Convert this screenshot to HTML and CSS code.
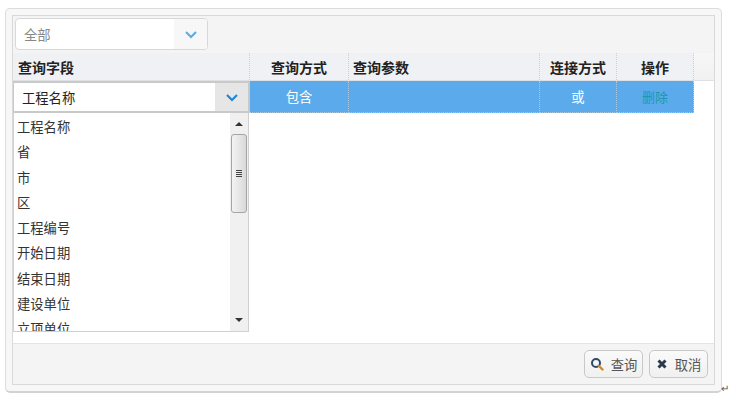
FILE: index.html
```html
<!DOCTYPE html>
<html lang="zh-CN">
<head>
<meta charset="utf-8">
<title>查询</title>
<link rel="stylesheet" href="styles.css">
</head>
<body>
<div class="window">
  <div class="panel">
    <div class="toolbar">
      <div class="select">
        <span class="select-text">全部</span>
        <span class="select-arrow"><svg width="14" height="9" viewBox="0 0 14 9"><path d="M2 2l5 5 5-5" fill="none" stroke="#5aace8" stroke-width="2"/></svg></span>
      </div>
    </div>
    <div class="grid-wrap">
      <div class="row head">
        <div class="cell c1 left first">查询字段</div>
        <div class="cell c2">查询方式</div>
        <div class="cell c3 left">查询参数</div>
        <div class="cell c4">连接方式</div>
        <div class="cell c5">操作</div>
        <div class="cell c6"></div>
      </div>
      <div class="row body-row">
        <div class="cell c1 field">
          <span class="field-text">工程名称</span>
          <span class="field-arrow"><svg width="14" height="9" viewBox="0 0 14 9"><path d="M2 2l5 5 5-5" fill="none" stroke="#1e87d8" stroke-width="2.2"/></svg></span>
        </div>
        <div class="cell c2 sel">包含</div>
        <div class="cell c3 sel"></div>
        <div class="cell c4 sel">或</div>
        <div class="cell c5 sel del">删除</div>
      </div>
      <div class="dropdown">
        <ul class="list">
          <li>工程名称</li>
          <li>省</li>
          <li>市</li>
          <li>区</li>
          <li>工程编号</li>
          <li>开始日期</li>
          <li>结束日期</li>
          <li>建设单位</li>
          <li>立项单位</li>
        </ul>
        <div class="scrollbar">
          <svg class="sb-up" width="8" height="4" viewBox="0 0 8 4"><path d="M4 0l4 4H0z" fill="#333"/></svg>
          <div class="thumb"><span class="grip"></span><span class="grip"></span><span class="grip"></span><span class="grip"></span></div>
          <svg class="sb-down" width="8" height="4" viewBox="0 0 8 4"><path d="M0 0h8L4 4z" fill="#333"/></svg>
        </div>
      </div>
    </div>
    <div class="footer">
      <button class="btn" type="button">
        <svg width="14" height="14" viewBox="0 0 14 14"><circle cx="6" cy="6" r="4" fill="none" stroke="#2f4a66" stroke-width="2"/><path d="M9 9l3.500 3.500" stroke="#c98a2e" stroke-width="2.400" stroke-linecap="round"/></svg>
        <span>查询</span>
      </button>
      <button class="btn" type="button">
        <svg width="12" height="12" viewBox="0 0 12 12"><path d="M2.500 2.500l7 7M9.500 2.500l-7 7" stroke="#2b3a4a" stroke-width="3"/></svg>
        <span>取消</span>
      </button>
    </div>
  </div>
</div>
<span class="return-mark">↵</span>
</body>
</html>
```
FILE: styles.css
```css
html, body {
  margin: 0;
  padding: 0;
  background: #fff;
}
body {
  width: 729px;
  height: 400px;
  overflow: hidden;
  position: relative;
  font-family: "Liberation Sans", "Noto Sans CJK SC", sans-serif;
  font-size: 13.3px;
  color: #333;
  padding: 8px 0 0 5px;
  box-sizing: border-box;
}
.window {
  width: 717px;
  height: 385px;
  box-sizing: border-box;
  border: 1px solid #dcdcdc;
  border-bottom: 2px solid #d2d2d2;
  border-radius: 5px;
  padding: 6px;
  background: #f7f7f7;
}
.panel {
  height: 100%;
  box-sizing: border-box;
  border: 1px solid #d9d9d9;
  background: #fff;
  display: flex;
  flex-direction: column;
}
.toolbar {
  height: 37px;
  flex: none;
  box-sizing: border-box;
  background: #f4f4f5;
  padding: 2px 0 0 2px;
}
.select {
  width: 193px;
  height: 32px;
  box-sizing: border-box;
  border: 1px solid #d8d8d8;
  border-radius: 4px;
  background: #fff;
  display: flex;
  align-items: center;
  overflow: hidden;
}
.select-text {
  flex: 1;
  padding-left: 8px;
  color: #888;
}
.select-arrow {
  width: 33px;
  height: 100%;
  background: #f7f7f7;
  display: flex;
  align-items: center;
  justify-content: center;
}
.grid-wrap {
  flex: 1;
  position: relative;
  min-height: 0;
}
.row {
  display: flex;
}
.head {
  height: 28px;
  background: #f0f1f4;
  border-bottom: 1px solid #dfe0e3;
  box-sizing: border-box;
  font-size: 14px;
  font-weight: bold;
  color: #222;
}
.body-row {
  height: 32px;
  width: 681px;
}
.cell {
  box-sizing: border-box;
  border-right: 1px dotted #cdcfd2;
  display: flex;
  align-items: center;
  justify-content: center;
}
.left {
  justify-content: flex-start;
  padding-left: 4px;
}
.first {
  padding-left: 5px;
}
.c1 { width: 237px; }
.c2 { width: 99px; }
.c3 { width: 191px; }
.c4 { width: 77px; }
.c5 { width: 77px; }
.c6 { flex: 1; border-right: 0; background: linear-gradient(#f7f7f7, #f1f1f1); }
.field {
  border: 2px solid #c9c9c9;
  border-left-width: 1px;
  background: #fff;
  color: #222;
  justify-content: flex-start;
  padding-left: 8px;
}
.field-text {
  flex: 1;
}
.field-arrow {
  width: 33px;
  align-self: stretch;
  background: #e6e6e6;
  display: flex;
  align-items: center;
  justify-content: center;
}
.sel {
  background: #5babec;
  color: #fff;
  border-bottom: 1px dotted #a9c8e4;
  border-right-color: #a9c8e4;
}
.del {
  color: #1f97a8;
  font-size: 13px;
}
.dropdown {
  position: absolute;
  left: 0;
  top: 60px;
  width: 236px;
  height: 219px;
  box-sizing: border-box;
  border: 1px solid #d0d0d0;
  border-top: 0;
  background: #fff;
  display: flex;
  overflow: hidden;
}
.list {
  flex: 1;
  margin: 0;
  padding: 2px 0 0 3px;
  list-style: none;
  color: #333;
}
.list li {
  height: 25.3px;
  line-height: 25.3px;
  white-space: nowrap;
}
.scrollbar {
  width: 18px;
  flex: none;
  background: #f0f0f0;
  display: flex;
  flex-direction: column;
  align-items: center;
  position: relative;
}
.sb-up {
  margin-top: 9px;
}
.sb-down {
  position: absolute;
  bottom: 9px;
  left: 5px;
}
.thumb {
  width: 16px;
  height: 79px;
  margin-top: 8px;
  box-sizing: border-box;
  border: 1px solid #a5a5a5;
  border-radius: 3px;
  background: linear-gradient(90deg, #f3f3f3, #d9d9d9);
  display: flex;
  flex-direction: column;
  align-items: center;
  justify-content: center;
  gap: 1px;
}
.grip {
  width: 6px;
  height: 1px;
  background: #444;
}
.footer {
  height: 41px;
  flex: none;
  box-sizing: border-box;
  background: #f4f4f4;
  border-top: 1px solid #e4e4e4;
  display: flex;
  justify-content: flex-end;
  align-items: flex-start;
  gap: 6px;
  padding: 6px 6px 0 0;
}
.btn {
  height: 28px;
  width: 59px;
  box-sizing: border-box;
  border: 1px solid #c8c8c8;
  border-radius: 5px;
  background: linear-gradient(#fafafa, #f0f0f0);
  font: inherit;
  color: #555;
  display: flex;
  align-items: center;
  justify-content: center;
  gap: 7px;
  padding: 0;
}
.return-mark {
  position: absolute;
  left: 721px;
  top: 382px;
  font-size: 10px;
  color: #555;
  line-height: 14px;
}
```
